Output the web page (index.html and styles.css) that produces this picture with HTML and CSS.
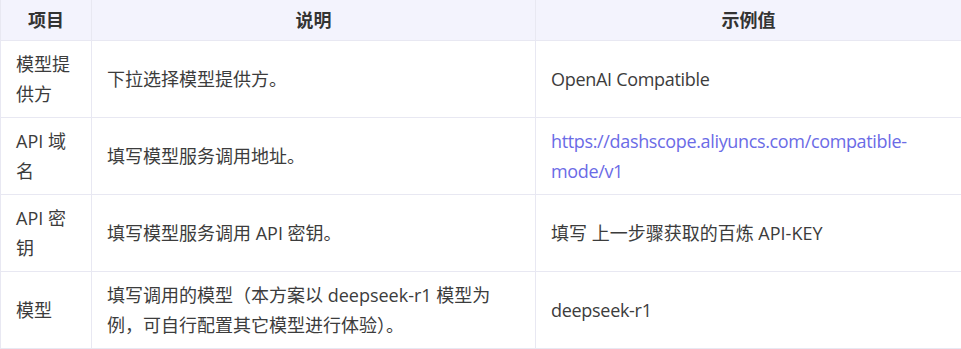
FILE: index.html
```html
<!DOCTYPE html>
<html lang="zh-CN">
<head>
<meta charset="utf-8">
<link rel="stylesheet" href="styles.css">
</head>
<body>
<table class="spec">
  <colgroup>
    <col class="c1">
    <col class="c2">
    <col class="c3">
  </colgroup>
  <thead>
    <tr><th>项目</th><th>说明</th><th>示例值</th></tr>
  </thead>
  <tbody>
    <tr>
      <td>模型提供方</td>
      <td>下拉选择模型提供方。</td>
      <td class="latin">OpenAI Compatible</td>
    </tr>
    <tr>
      <td>API 域名</td>
      <td>填写模型服务调用地址。</td>
      <td><a class="link" href="#">https://dashscope.aliyuncs.com/compatible-mode/v1</a></td>
    </tr>
    <tr>
      <td>API 密钥</td>
      <td>填写模型服务调用 API 密钥。</td>
      <td>填写 上一步骤获取的百炼 API-KEY</td>
    </tr>
    <tr>
      <td>模型</td>
      <td>填写调用的模型（本方案以 deepseek-r1 模型为例，可自行配置其它模型进行体验）。</td>
      <td class="latin">deepseek-r1</td>
    </tr>
  </tbody>
</table>
</body>
</html>
```
FILE: styles.css
```css
html, body {
  margin: 0;
  padding: 0;
  background: #ffffff;
}
body {
  font-family: "Open Sans", "Noto Sans CJK SC", sans-serif;
  font-size: 18px;
  color: #3c3c3c;
}
.spec {
  border-collapse: collapse;
  width: 961px;
  table-layout: fixed;
}
.c1 { width: 91px; }
.c2 { width: 444px; }
.c3 { width: 426px; }
.spec th,
.spec td {
  border: 1px solid #e8e8f2;
  padding: 8px 15px;
  line-height: 30px;
  text-align: left;
  vertical-align: middle;
  word-break: break-word;
}
.spec th {
  background: #f3f3fd;
  font-weight: bold;
  text-align: center;
  color: #333333;
  padding-top: 5px;
  padding-bottom: 5px;
}
.spec tr:first-child th { border-top: none; }
.spec td.latin { letter-spacing: -0.3px; }
.link {
  color: #6b6be6;
  text-decoration: none;
  letter-spacing: -0.35px;
}
```
